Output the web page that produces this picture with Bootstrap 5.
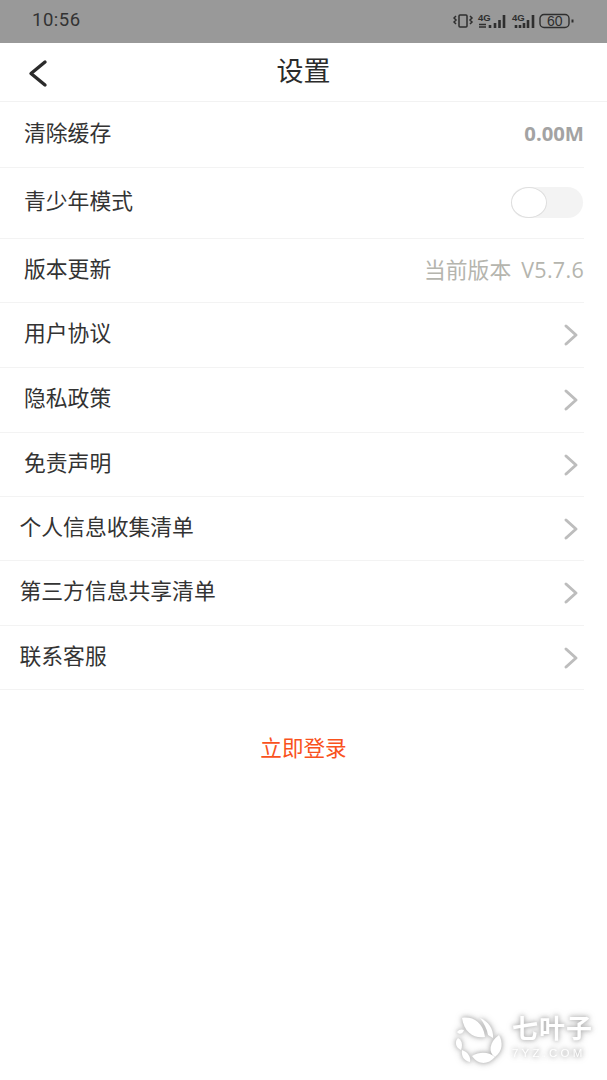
<!DOCTYPE html>
<html lang="zh-CN">
<head>
  <meta charset="UTF-8">
  <title>设置</title>
  <link href="https://cdn.jsdelivr.net/npm/bootstrap@5.3.2/dist/css/bootstrap.min.css" rel="stylesheet">
  <style>
    body {
      height: 1080px;
      overflow: hidden;
      background: #fff;
      font-family: "Liberation Sans", "Noto Sans CJK SC", sans-serif;
      position: relative;
    }
    .status-strip {
      height: 43px;
      background: #999;
      padding: 0 33px 2px 32px;
      color: #333;
    }
    .status-time { font-size: 18.500px; font-family: Roboto, sans-serif; letter-spacing: .5px; }
    .title-strip { height: 59px; border-bottom: 1px solid #f2f2f2; }
    .back-link { position: absolute; left: 26px; top: 58px; line-height: 0; }
    .page-title { font-size: 27px; color: #2b2b2b; line-height: 1; margin-top: 0; }
    .menu-line {
      border-bottom: 1px solid #f3f3f3;
      width: 584px;
      font-size: 21.800px;
      color: #333;
    }
    .h-66 { height: 66px; }
    .h-71 { height: 71px; }
    .h-64 { height: 64px; }
    .h-65 { height: 65px; }
    .menu-label { padding-left: 24px; line-height: 1; margin-top: -2px; }
    .menu-label-wide { padding-left: 19.500px; }
    .cache-size { font-size: 20.300px; font-family: "Open Sans", sans-serif; font-weight: 700; color: #a3a3a3; margin-top: -3px; }
    .version-text { font-size: 21.800px; color: #b5b5ae; margin-top: 1px; }
    .version-num { font-family: "Open Sans", sans-serif; font-size: 21.500px; letter-spacing: .3px; margin-left: 10px; }
    .fake-switch {
      width: 72px;
      height: 31px;
      margin-right: 1px;
      background: #f3f3f3;
      border-radius: 16px;
      position: relative;
      margin-top: -2px;
    }
    .fake-switch::before {
      content: "";
      position: absolute;
      left: 0;
      top: 0;
      width: 36px;
      height: 31px;
      background: #fff;
      border: 1px solid #dedede;
      border-radius: 50%;
    }
    .menu-arrow { display: block; margin-right: 5px; }
    .login-text { font-size: 21.600px; color: #f9521d; margin-top: 45px; line-height: 1.3; }
    .watermark {
      position: absolute;
      left: 450px;
      top: 1011px;
      color: #fff;
      filter: drop-shadow(0 0 2px #b0b0b0) drop-shadow(0 0 3px #d0d0d0);
    }
    .mark-name { font-size: 26px; line-height: 1; letter-spacing: 1px; font-weight: 700; }
    .mark-url { font-size: 11.500px; line-height: 1; letter-spacing: 3.200px; margin-top: 6px; }
  </style>
</head>
<body>

  <div class="status-strip d-flex align-items-center justify-content-between">
    <span class="status-time">10:56</span>
    <svg width="121" height="16" viewBox="0 0 121 16" fill="none" stroke="#2e2e2e" stroke-width="1.500">
      <rect x="6" y="2" width="8" height="12" rx="1"/>
      <path d="M3 3l-2 2 2 2-2 2 2 2M17 3l2 2-2 2 2 2-2 2"/>
      <g stroke-width="2.600">
        <path d="M37 15v-3M42 15v-5M46.500 15v-8M51 15v-13"/>
        <path d="M63 15v-3M67 15v-3M71 15v-5M75 15v-8M80 15v-13"/>
      </g>
      <text x="25" y="8" font-size="9.500" font-weight="700" fill="#2e2e2e" stroke="none" font-family="Liberation Sans">4G</text>
      <text x="59" y="8" font-size="9.500" font-weight="700" fill="#2e2e2e" stroke="none" font-family="Liberation Sans">4G</text>
      <path d="M26 11.500h7M26 14h7" stroke-width="1.400"/>
      <rect x="87" y="1.500" width="29" height="13" rx="4" stroke-width="1.400"/>
      <text x="94" y="13.200" font-size="14" fill="#2e2e2e" stroke="none" font-family="Liberation Sans">60</text>
      <path d="M119.500 6.500v3" stroke-width="2"/>
    </svg>
  </div>

  <div class="title-strip d-flex align-items-center justify-content-center">
    <div class="page-title">设置</div>
  </div>
  <a class="back-link" href="#">
    <svg width="24" height="30" viewBox="0 0 24 30" fill="none" stroke="#2b2b2b" stroke-width="3.400" stroke-linecap="round" stroke-linejoin="round">
      <path d="M19 4L5 15.500 19 27"/>
    </svg>
  </a>

  <div id="menuList"></div>

  <div class="text-center login-text">立即登录</div>

  <div class="watermark d-flex align-items-center gap-2">
    <svg width="54" height="54" viewBox="0 0 54 54" fill="#fff">
      <path d="M12 7C21 5 33 10 35 26 25 28 14 22 12 7Z"/>
      <path d="M30 7C38 10 44 18 43 27L38 24C37 18 34 12 30 7Z"/>
      <path d="M49 24C53 31 53 40 45 46 38 42 39 31 49 24Z"/>
      <path d="M22 45C30 40 39 41 45 46 38 54 28 54 22 45Z"/>
      <path d="M12 39C18 41 21 46 20 51 14 50 11 45 12 39Z"/>
      <path d="M8 27C12 29 13 34 11 39 6 37 4 31 8 27Z"/>
      <path d="M7 21C9 18 12 18 14 19 13 23 9 24 7 21Z"/>
    </svg>
    <div>
      <div class="mark-name">七叶子</div>
      <div class="mark-url">7YZ.COM</div>
    </div>
  </div>

  <script>
    // rows of the settings list, top to bottom
    const arrow = '<svg class="menu-arrow" width="16" height="24" viewBox="0 0 16 24" fill="none" stroke="#bdbdbd" stroke-width="3" stroke-linecap="round" stroke-linejoin="round"><path d="M3 3l10 9-10 9"/></svg>';
    const rows = [
      { text: '清除缓存', h: 66, right: '<span class="cache-size">0.00M</span>' },
      { text: '青少年模式', h: 71, right: '<div class="fake-switch"></div>' },
      { text: '版本更新', h: 64, right: '<span class="version-text">当前版本<span class="version-num">V5.7.6</span></span>' },
      { text: '用户协议', h: 65, right: arrow },
      { text: '隐私政策', h: 65, right: arrow },
      { text: '免责声明', h: 64, right: arrow },
      { text: '个人信息收集清单', h: 64, right: arrow, wide: true },
      { text: '第三方信息共享清单', h: 65, right: arrow, wide: true },
      { text: '联系客服', h: 64, right: arrow, wide: true }
    ];

    const list = document.getElementById('menuList');
    rows.forEach(row => {
      const div = document.createElement('div');
      div.className = `menu-line h-${row.h} d-flex align-items-center justify-content-between`;
      div.innerHTML = `<span class="menu-label ${row.wide ? 'menu-label-wide' : ''}">${row.text}</span>${row.right}`;
      list.appendChild(div);
    });
  </script>

  <script src="https://cdn.jsdelivr.net/npm/bootstrap@5.3.2/dist/js/bootstrap.bundle.min.js"></script>
</body>
</html>
